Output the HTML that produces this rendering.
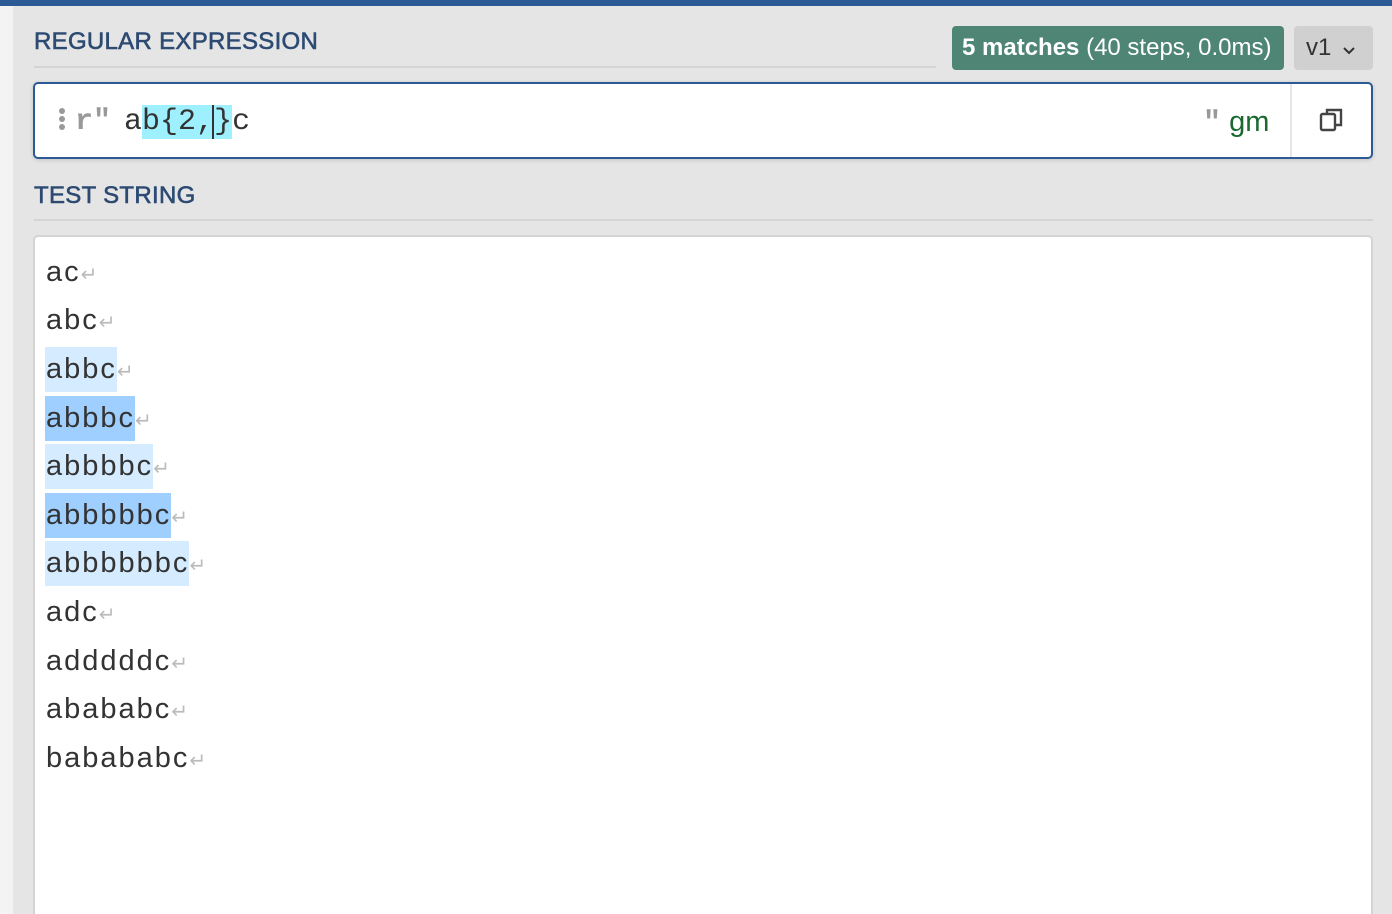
<!DOCTYPE html>
<html><head><style>
*{margin:0;padding:0;box-sizing:border-box}
html,body{width:1392px;height:914px;overflow:hidden}
body{background:#e5e5e5;font-family:"Liberation Sans",sans-serif;position:relative}
.top{position:absolute;left:0;top:0;width:1392px;height:6px;background:#2b5a94}
.left{position:absolute;left:0;top:6px;width:13px;height:908px;background:#f3f3f3}
.h{position:absolute;left:34px;color:#2c4a72;font-size:24px;letter-spacing:0.3px;-webkit-text-stroke:0.6px #2c4a72}
.rule{position:absolute;left:34px;height:2px;background:#d4d4d4}
.badge{position:absolute;left:952px;top:26px;width:332px;height:44px;background:#4e8574;border-radius:4px;color:#fff;font-size:24px;line-height:44px;padding-left:10px;white-space:nowrap}
.ver{position:absolute;left:1294px;top:26px;width:79px;height:44px;background:#d0d0d0;border-radius:4px;color:#333;font-size:24px;line-height:44px;padding-left:12px}
.rx{position:absolute;left:33px;top:82px;width:1340px;height:77px;background:#fff;border:2px solid #2b5a94;border-radius:5px;box-shadow:0 1px 4px rgba(0,0,0,.15)}
.mono{font-family:"Liberation Mono",monospace;font-size:30px}
.ts{position:absolute;left:33px;top:235px;width:1340px;height:690px;background:#fff;border:2px solid #d4d4d4;border-radius:5px}
.line{position:absolute;left:11px;font-size:29px;letter-spacing:2px;color:#333;height:45px;line-height:45px;white-space:nowrap}
.line span.m1,.line span.m2{display:inline-block;height:45px;margin-left:-1px;padding-left:1px}
.line span.m1{background:#d5ebff}
.line span.m2{background:#9fcfff}
.nl{color:#bbb;font-size:20px;letter-spacing:0}
</style></head><body>
<div class="top"></div><div class="left"></div>
<div class="h" style="top:28px">REGULAR EXPRESSION</div>
<div class="rule" style="top:66px;width:902px"></div>
<div class="badge"><b>5 matches</b> (40 steps, 0.0ms)</div>
<div class="ver">v1 <svg width="14" height="10" viewBox="0 0 14 10" style="margin-left:4px"><path d="M2 3l5 5 5-5" stroke="#333" stroke-width="2" fill="none"/></svg></div>
<div class="rx">
 <div style="position:absolute;left:24px;top:24px;width:6px"><div style="width:6px;height:6px;border-radius:3px;background:#999;margin-bottom:2px"></div><div style="width:6px;height:6px;border-radius:3px;background:#999;margin-bottom:2px"></div><div style="width:6px;height:6px;border-radius:3px;background:#999"></div></div>
 <div class="mono" style="position:absolute;left:40px;top:18px;line-height:40px;color:#333;white-space:pre"><span style="color:#999;font-weight:bold">r"</span><span style="margin-left:-5px"> a</span><span style="background:#9ff0ff">b{2,</span><span style="border-left:2px solid #333;margin-left:-2px"></span><span style="background:#9ff0ff">}</span>c</div>
 <div style="position:absolute;left:1168px;top:18px;line-height:40px;white-space:pre"><span class="mono" style="color:#999;font-weight:bold">"</span><span style="color:#1a6a30;font-size:29px"> gm</span></div>
 <div style="position:absolute;left:1255px;top:0;width:2px;height:73px;background:#e6e6e6"></div>
 <svg style="position:absolute;left:1284px;top:22px" width="26" height="28" viewBox="0 0 26 28"><rect x="2" y="8" width="14" height="16" rx="1.5" fill="none" stroke="#444" stroke-width="2.4"/><path d="M8 8V4h14v15h-6" fill="none" stroke="#444" stroke-width="2.4"/></svg>
</div>
<div class="h" style="top:182px">TEST STRING</div>
<div class="rule" style="top:219px;width:1339px"></div>
<div class="ts">
 <div class="line" style="top:13px">ac<span class="nl">↵</span></div>
 <div class="line" style="top:61px">abc<span class="nl">↵</span></div>
 <div class="line" style="top:110px"><span class="m1">abbc</span><span class="nl">↵</span></div>
 <div class="line" style="top:159px"><span class="m2">abbbc</span><span class="nl">↵</span></div>
 <div class="line" style="top:207px"><span class="m1">abbbbc</span><span class="nl">↵</span></div>
 <div class="line" style="top:256px"><span class="m2">abbbbbc</span><span class="nl">↵</span></div>
 <div class="line" style="top:304px"><span class="m1">abbbbbbc</span><span class="nl">↵</span></div>
 <div class="line" style="top:353px">adc<span class="nl">↵</span></div>
 <div class="line" style="top:402px">adddddc<span class="nl">↵</span></div>
 <div class="line" style="top:450px">abababc<span class="nl">↵</span></div>
 <div class="line" style="top:499px">babababc<span class="nl">↵</span></div>
</div>
</body></html>
